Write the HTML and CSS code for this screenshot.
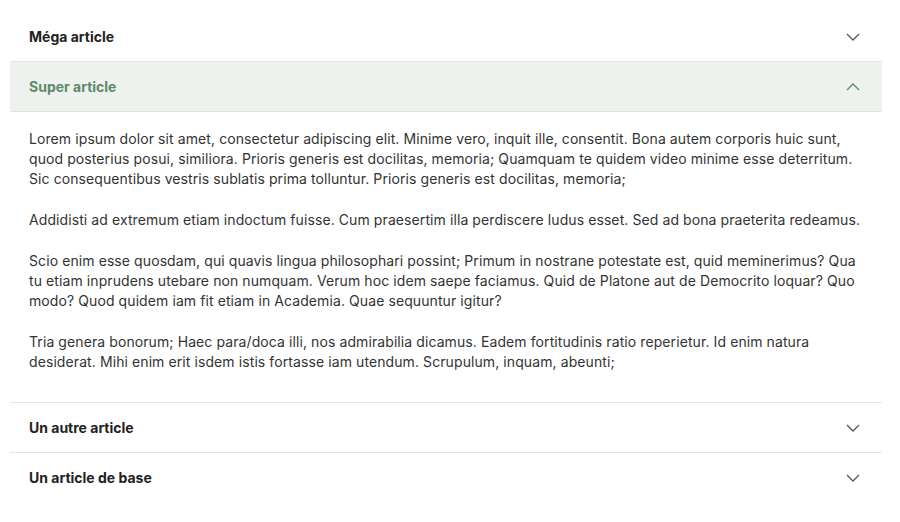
FILE: index.html
```html
<!DOCTYPE html>
<html lang="fr">
<head>
<meta charset="utf-8">
<link rel="stylesheet" href="styles.css">
</head>
<body>
<div class="accordion">
  <div class="item">
    <div class="header">
      <span class="title">Méga article</span>
      <svg class="chev" viewBox="0 0 14 8" width="14" height="8"><path d="M1 1l6 6 6-6" fill="none" stroke="currentColor" stroke-width="1.3"/></svg>
    </div>
  </div>
  <div class="item open">
    <div class="header">
      <span class="title">Super article</span>
      <svg class="chev" viewBox="0 0 14 8" width="14" height="8"><path d="M1 7l6-6 6 6" fill="none" stroke="currentColor" stroke-width="1.3"/></svg>
    </div>
    <div class="content">
      <p>Lorem ipsum dolor sit amet, consectetur adipiscing elit. Minime vero, inquit ille, consentit. Bona autem corporis huic sunt, quod posterius posui, similiora. Prioris generis est docilitas, memoria; Quamquam te quidem video minime esse deterritum. Sic consequentibus vestris sublatis prima tolluntur. Prioris generis est docilitas, memoria;</p>
      <p>Addidisti ad extremum etiam indoctum fuisse. Cum praesertim illa perdiscere ludus esset. Sed ad bona praeterita redeamus.</p>
      <p>Scio enim esse quosdam, qui quavis lingua philosophari possint; Primum in nostrane potestate est, quid meminerimus? Qua tu etiam inprudens utebare non numquam. Verum hoc idem saepe faciamus. Quid de Platone aut de Democrito loquar? Quo modo? Quod quidem iam fit etiam in Academia. Quae sequuntur igitur?</p>
      <p>Tria genera bonorum; Haec para/doca illi, nos admirabilia dicamus. Eadem fortitudinis ratio reperietur. Id enim natura desiderat. Mihi enim erit isdem istis fortasse iam utendum. Scrupulum, inquam, abeunti;</p>
    </div>
  </div>
  <div class="item">
    <div class="header">
      <span class="title">Un autre article</span>
      <svg class="chev" viewBox="0 0 14 8" width="14" height="8"><path d="M1 1l6 6 6-6" fill="none" stroke="currentColor" stroke-width="1.3"/></svg>
    </div>
  </div>
  <div class="item">
    <div class="header">
      <span class="title">Un article de base</span>
      <svg class="chev" viewBox="0 0 14 8" width="14" height="8"><path d="M1 1l6 6 6-6" fill="none" stroke="currentColor" stroke-width="1.3"/></svg>
    </div>
  </div>
</div>
</body>
</html>
```
FILE: styles.css
```css
html, body {
  margin: 0;
  background: #fff;
}
body {
  padding: 12px 18px 0 10px;
  font-family: Inter, "Noto Sans", sans-serif;
  color: #2b2b2b;
}
.accordion {
  display: flex;
  flex-direction: column;
}
.item + .item {
  border-top: 1px solid #e3e3e3;
}
.header {
  height: 49px;
  display: flex;
  align-items: center;
  justify-content: space-between;
  padding: 0 22px 0 19px;
}
.title {
  font-size: 14px;
  font-weight: 700;
  color: #222;
}
.chev {
  color: #555;
}
.open .header {
  background: #eef2ef;
  border-bottom: 1px solid #e0e3e0;
}
.open .title,
.open .chev {
  color: #5e8a69;
}
.content {
  padding: 17px 19px 19px 19px;
}
.content p {
  margin: 0 0 21px;
  font-size: 14px;
  line-height: 20px;
  letter-spacing: 0.09px;
  color: #333;
}
.content p:last-child {
  margin-bottom: 11px;
}
```
